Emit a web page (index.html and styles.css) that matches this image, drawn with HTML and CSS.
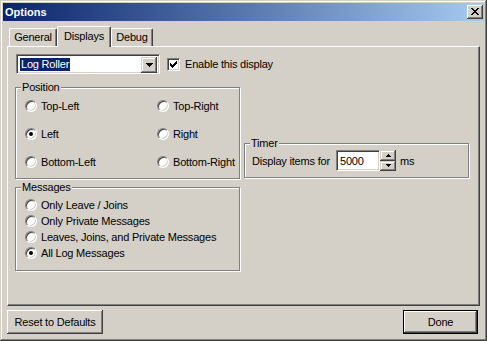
FILE: index.html
```html
<!DOCTYPE html>
<html>
<head>
<meta charset="utf-8">
<title>Options</title>
<link rel="stylesheet" href="styles.css">
</head>
<body>
<div class="window">
  <div class="titlebar">
    <span class="title">Options</span>
    <span class="close-btn"><svg width="8" height="7" viewBox="0 0 8 7" shape-rendering="crispEdges"><path fill="#000" d="M0 0h2v1h-2z M6 0h2v1h-2z M1 1h2v1h-2z M5 1h2v1h-2z M2 2h4v1h-4z M3 3h2v1h-2z M2 4h4v1h-4z M1 5h2v1h-2z M5 5h2v1h-2z M0 6h2v1h-2z M6 6h2v1h-2z"/></svg></span>
  </div>
  <div class="content">
    <div class="tabs">
      <div class="tab tab-general">General</div>
      <div class="tab tab-displays active">Displays</div>
      <div class="tab tab-debug">Debug</div>
    </div>
    <div class="panel">
      <div class="row-top">
        <div class="combo">
          <span class="combo-value"><span class="sel">Log Roller</span></span>
          <span class="combo-btn"><svg width="7" height="4" viewBox="0 0 7 4" shape-rendering="crispEdges"><path fill="#000" d="M0 0h7v1h-7z M1 1h5v1h-5z M2 2h3v1h-3z M3 3h1v1h-1z"/></svg></span>
        </div>
        <label class="check">
          <span class="checkbox"><svg width="7" height="7" viewBox="0 0 7 7" shape-rendering="crispEdges"><path fill="#000" d="M0 2H1V3H2V4H3V3H4V2H5V1H6V0H7V3H6V4H5V5H4V6H3V7H2V6H1V5H0Z"/></svg></span>
          <span>Enable this display</span>
        </label>
      </div>
      <div class="groups">
        <fieldset class="group position">
          <legend>Position</legend>
          <div class="radio-grid">
            <div class="radio-opt"><span class="radio"></span><span>Top-Left</span></div>
            <div class="radio-opt"><span class="radio"></span><span>Top-Right</span></div>
            <div class="radio-opt"><span class="radio checked"></span><span>Left</span></div>
            <div class="radio-opt"><span class="radio"></span><span>Right</span></div>
            <div class="radio-opt"><span class="radio"></span><span>Bottom-Left</span></div>
            <div class="radio-opt"><span class="radio"></span><span>Bottom-Right</span></div>
          </div>
        </fieldset>
        <fieldset class="group timer">
          <legend>Timer</legend>
          <div class="timer-row">
            <span class="timer-label">Display items for</span>
            <span class="num-input">5000</span>
            <span class="spinner">
              <span class="spin-btn"><svg width="5" height="3" viewBox="0 0 5 3" shape-rendering="crispEdges"><path fill="#000" d="M2 0h1v1h-1z M1 1h3v1h-3z M0 2h5v1h-5z"/></svg></span>
              <span class="spin-btn"><svg width="5" height="3" viewBox="0 0 5 3" shape-rendering="crispEdges"><path fill="#000" d="M0 0h5v1h-5z M1 1h3v1h-3z M2 2h1v1h-1z"/></svg></span>
            </span>
            <span class="unit">ms</span>
          </div>
        </fieldset>
      </div>
      <fieldset class="group messages">
        <legend>Messages</legend>
        <div class="radio-list">
          <div class="radio-opt"><span class="radio"></span><span>Only Leave / Joins</span></div>
          <div class="radio-opt"><span class="radio"></span><span>Only Private Messages</span></div>
          <div class="radio-opt"><span class="radio"></span><span>Leaves, Joins, and Private Messages</span></div>
          <div class="radio-opt"><span class="radio checked"></span><span>All Log Messages</span></div>
        </div>
      </fieldset>
    </div>
    <div class="buttons">
      <button class="btn btn-reset">Reset to Defaults</button>
      <button class="btn btn-done">Done</button>
    </div>
  </div>
</div>
</body>
</html>
```

FILE: styles.css
```css
html, body {
  margin: 0;
  padding: 0;
  background: #d4d0c8;
}

body {
  font-family: "Liberation Sans", Arial, sans-serif;
  font-size: 11px;
  letter-spacing: -0.2px;
  color: #000;
}

.window {
  width: 487px;
  height: 341px;
  box-sizing: border-box;
  padding: 3px;
  background: #d4d0c8;
  box-shadow: inset -1px -1px #404040, inset 1px 1px #d4d0c8, inset -2px -2px #808080, inset 2px 2px #fff;
  display: flex;
  flex-direction: column;
}

.titlebar {
  height: 18px;
  flex: none;
  display: flex;
  align-items: center;
  justify-content: space-between;
  padding: 0 1px 0 2px;
  background: linear-gradient(to right, #0a246a, #a6caf0);
  color: #fff;
}

.title {
  font-weight: bold;
  letter-spacing: 0;
}

.close-btn {
  width: 16px;
  height: 14px;
  box-sizing: border-box;
  background: #d4d0c8;
  box-shadow: inset -1px -1px #404040, inset 1px 1px #fff, inset -2px -2px #808080;
  display: flex;
  align-items: center;
  justify-content: center;
  padding: 0 0 1px 0;
}

.close-btn svg { display: block; }

.content {
  flex: 1;
  padding: 1px 4px 0 4px;
  display: flex;
  flex-direction: column;
}

.tabs {
  height: 24px;
  flex: none;
  display: flex;
  align-items: flex-end;
  padding-left: 2px;
  position: relative;
  z-index: 1;
}

.tab {
  height: 18px;
  box-sizing: border-box;
  border-left: 1px solid #fff;
  border-top: 1px solid #fff;
  border-right: 1px solid #404040;
  border-radius: 2px 2px 0 0;
  box-shadow: inset -1px 0 #808080;
  background: #d4d0c8;
  display: flex;
  align-items: center;
  justify-content: center;
  padding-bottom: 1px;
}

.tab-general { width: 48px; }
.tab-displays { width: 54px; }
.tab-debug { width: 42px; }

.tab.active {
  height: 21px;
  margin-bottom: -1px;
  padding-bottom: 3px;
}

.panel {
  height: 260px;
  box-sizing: border-box;
  border: 1px solid;
  border-color: #fff #404040 #404040 #fff;
  box-shadow: inset -1px -1px #808080;
  padding: 7px 7px;
  flex: none;
}

.row-top {
  display: flex;
  align-items: center;
  gap: 7px;
  padding-left: 1px;
}

.combo {
  width: 144px;
  height: 20px;
  box-sizing: border-box;
  background: #fff;
  border: 1px solid;
  border-color: #808080 #fff #fff #808080;
  box-shadow: inset 1px 1px #404040, inset -1px -1px #d4d0c8;
  padding: 2px;
  display: flex;
}

.combo-value {
  flex: 1;
  display: flex;
  align-items: center;
  padding-left: 1px;
}

.sel {
  display: block;
  background: #0a246a;
  color: #fff;
  line-height: 13px;
  padding: 0 1px;
}

.combo-btn {
  width: 16px;
  height: 16px;
  box-sizing: border-box;
  background: #d4d0c8;
  box-shadow: inset -1px -1px #404040, inset 1px 1px #d4d0c8, inset -2px -2px #808080, inset 2px 2px #fff;
  display: flex;
  align-items: center;
  justify-content: center;
}

.combo-btn svg, .spin-btn svg, .checkbox svg { display: block; }

.check {
  display: flex;
  align-items: center;
  gap: 5px;
}

.checkbox {
  width: 13px;
  height: 13px;
  box-sizing: border-box;
  background: #fff;
  border: 1px solid;
  border-color: #808080 #fff #fff #808080;
  box-shadow: inset 1px 1px #404040, inset -1px -1px #d4d0c8;
  display: flex;
  align-items: center;
  justify-content: center;
}

.group {
  margin: 0;
  padding: 0;
  min-width: 0;
  border: 1px solid #808080;
  box-shadow: inset 1px 1px #fff, 1px 1px #fff;
}

.group legend {
  padding: 0 1px;
  margin-left: 5px;
  line-height: 13px;
  background: #d4d0c8;
}

.groups {
  display: grid;
  grid-template-columns: 225px 225px;
  column-gap: 4px;
  align-items: end;
  margin-top: 7px;
}

.radio-grid {
  display: grid;
  grid-template-columns: 132px auto;
  row-gap: 15px;
  padding: 5px 0 10px 9px;
}

.radio-opt {
  display: flex;
  align-items: center;
  gap: 4px;
  height: 13px;
}

.radio {
  width: 12px;
  height: 12px;
  box-sizing: border-box;
  border-radius: 50%;
  background: #fff;
  border: 1px solid;
  border-color: #808080 #fff #fff #808080;
  box-shadow: inset 1px 1px #404040, inset -1px -1px #d4d0c8;
  display: flex;
  align-items: center;
  justify-content: center;
  flex: none;
}

.radio.checked::after {
  content: "";
  width: 4px;
  height: 4px;
  border-radius: 50%;
  background: #000;
}

.timer {
  margin-bottom: 1px;
}

.timer-row {
  display: flex;
  align-items: center;
  padding: 0 0 6px 7px;
  margin-top: 0;
}

.timer-label {
  width: 84px;
}

.num-input {
  width: 44px;
  height: 21px;
  box-sizing: border-box;
  background: #fff;
  border: 1px solid;
  border-color: #808080 #fff #fff #808080;
  box-shadow: inset 1px 1px #404040, inset -1px -1px #d4d0c8;
  padding: 0 0 0 3px;
  display: flex;
  align-items: center;
}

.spinner {
  display: flex;
  flex-direction: column;
  width: 16px;
  height: 21px;
}

.spin-btn {
  flex: 1;
  box-sizing: border-box;
  background: #d4d0c8;
  box-shadow: inset -1px -1px #404040, inset 1px 1px #d4d0c8, inset -2px -2px #808080, inset 2px 2px #fff;
  display: flex;
  align-items: center;
  justify-content: center;
}

.unit {
  margin-left: 4px;
}

.messages {
  width: 225px;
  box-sizing: border-box;
  margin-top: 2px;
}

.radio-list {
  display: flex;
  flex-direction: column;
  padding: 3px 0 9px 9px;
}

.radio-list .radio-opt {
  height: 16px;
}

.buttons {
  display: flex;
  justify-content: space-between;
  margin-top: 4px;
  padding-right: 2px;
}

.btn {
  font: inherit;
  letter-spacing: inherit;
  color: #000;
  height: 24px;
  margin: 0;
  padding: 0;
  border: none;
  background: #d4d0c8;
  box-shadow: inset -1px -1px #404040, inset 1px 1px #fff, inset -2px -2px #808080;
  text-align: center;
}

.btn-reset { width: 96px; }

.btn-done {
  width: 75px;
  border: 1px solid #000;
  box-shadow: inset -1px -1px #404040, inset 1px 1px #fff, inset -2px -2px #808080;
}
```
